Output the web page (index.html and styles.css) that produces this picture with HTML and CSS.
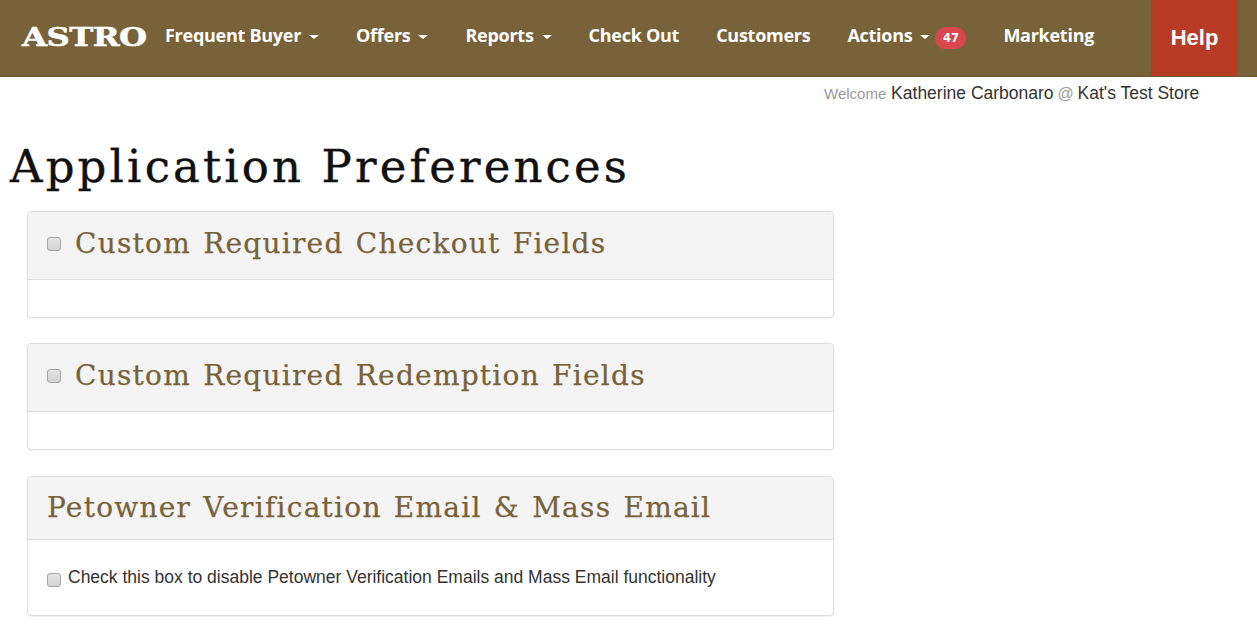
FILE: index.html
```html
<!DOCTYPE html>
<html lang="en">
<head>
<meta charset="utf-8">
<title>Application Preferences</title>
<link rel="stylesheet" href="styles.css">
</head>
<body>
<nav class="navbar">
  <a class="brand">ASTRO</a>
  <ul class="nav-list">
    <li class="nav-item"><a>Frequent Buyer</a><span class="caret"></span></li>
    <li class="nav-item"><a>Offers</a><span class="caret"></span></li>
    <li class="nav-item"><a>Reports</a><span class="caret"></span></li>
    <li class="nav-item"><a>Check Out</a></li>
    <li class="nav-item"><a>Customers</a></li>
    <li class="nav-item"><a>Actions</a><span class="caret"></span><span class="badge">47</span></li>
    <li class="nav-item"><a>Marketing</a></li>
  </ul>
  <a class="help">Help</a>
</nav>
<div class="welcome"><span class="muted">Welcome</span> Katherine Carbonaro <span class="muted at">@</span> Kat's Test Store</div>
<main class="content">
  <h1 class="page-title">Application Preferences</h1>
  <section class="panel">
    <header class="panel-heading"><input type="checkbox" class="check check-head"><h2>Custom Required Checkout Fields</h2></header>
    <div class="panel-body"></div>
  </section>
  <section class="panel">
    <header class="panel-heading"><input type="checkbox" class="check check-head"><h2>Custom Required Redemption Fields</h2></header>
    <div class="panel-body"></div>
  </section>
  <section class="panel panel-last">
    <header class="panel-heading panel-heading-plain"><h2>Petowner Verification Email &amp; Mass Email</h2></header>
    <div class="panel-body panel-body-filled"><label class="option"><input type="checkbox" class="check"><span>Check this box to disable Petowner Verification Emails and Mass Email functionality</span></label></div>
  </section>
</main>
</body>
</html>
```
FILE: styles.css
```css
* { box-sizing: border-box; }
html, body { margin: 0; padding: 0; }
body { font-family: "Liberation Sans", Arial, sans-serif; font-size: 16px; color: #222; background: #fff; overflow: hidden; }
.navbar { display: flex; align-items: stretch; height: 77px; background: #786239; border-bottom: 1px solid #6b5733; padding-left: 22px; }
.brand { align-self: center; width: 143px; margin-top: -3px; font-family: "DejaVu Serif", serif; font-weight: 700; font-size: 26px; letter-spacing: -0.4px; color: #fff; -webkit-text-stroke: 0.5px #fff; transform: scaleX(1.24); transform-origin: left center; }
.nav-list { display: flex; align-items: center; gap: 37px; list-style: none; margin: 0; padding: 0 0 6px; width: 986px; }
.nav-item { display: flex; align-items: center; color: #fff; font-family: "Open Sans", sans-serif; font-weight: 700; font-size: 18px; letter-spacing: -0.27px; white-space: nowrap; }
.caret { width: 0; height: 0; margin-left: 8px; border-left: 5px solid transparent; border-right: 5px solid transparent; border-top: 4px solid #fff; margin-top: 3px; }
.badge { margin-left: 5px; padding: 0 7.5px; height: 22px; line-height: 22px; border-radius: 11px; background: #d9474f; color: #fff; font-family: "DejaVu Sans", sans-serif; font-size: 11.5px; font-weight: 700; letter-spacing: 0; margin-top: 5px; }
.help { width: 87px; height: 76px; background: #b83c25; border-radius: 0 0 3px 3px; color: #fff; font-weight: 700; font-size: 22px; display: flex; align-items: center; justify-content: center; }
.welcome { padding: 5px 0 0 824px; height: 41px; font-size: 17.5px; line-height: 22px; white-space: nowrap; color: #333; }
.muted { color: #999; font-size: 15px; }
.at { font-size: 16px; margin: 0 -1px; }
.content { padding: 0 0 0 10px; }
.page-title { margin: 22px 0 0; height: 71px; font-family: "DejaVu Serif", serif; font-weight: 400; font-size: 45px; line-height: 53px; letter-spacing: 3.15px; color: #111; white-space: nowrap; -webkit-text-stroke: 0.4px #111; }
.panel { width: 807px; margin-left: 17px; border: 1px solid #ddd; border-radius: 4px; margin-bottom: 25px; background: #fff; box-shadow: 0 1px 1px rgba(0,0,0,.05); }
.panel-last { margin-top: 26px; }
.panel-heading { display: flex; align-items: center; gap: 14px; height: 68px; padding: 0 19px 4px; background: #f4f4f5; border-bottom: 1px solid #ddd; border-radius: 3px 3px 0 0; }
.panel-heading-plain { height: 63px; padding-bottom: 2px; }
.panel-heading h2 { margin: 0; font-family: "DejaVu Serif", serif; font-weight: 400; font-size: 28px; letter-spacing: 1.25px; word-spacing: 2px; color: #786239; white-space: nowrap; -webkit-text-stroke: 0.25px #786239; }
.panel-body { height: 37px; }
.panel-body-filled { height: 75px; padding: 27px 19px 0; }
.option { display: flex; align-items: center; gap: 7px; font-size: 17.5px; line-height: 20px; color: #333; }
.check { appearance: none; -webkit-appearance: none; flex: none; width: 14px; height: 14px; margin: 0; background: linear-gradient(#e4e4e4, #d2d2d2); border: 1px solid #a5a5a5; border-radius: 3px; }
.option .check { margin-top: 5px; }
```
